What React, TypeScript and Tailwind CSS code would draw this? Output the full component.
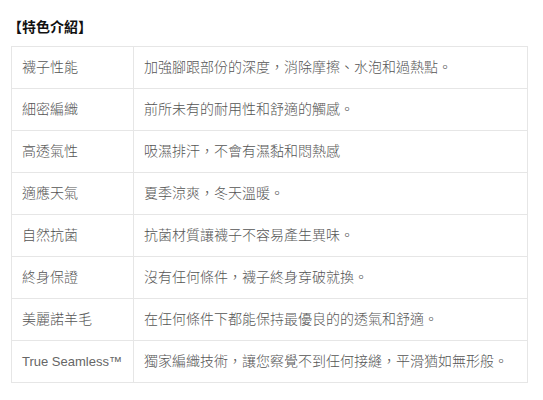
const rows: [string, string][] = [
  ["襪子性能", "加強腳跟部份的深度，消除摩擦、水泡和過熱點。"],
  ["細密編織", "前所未有的耐用性和舒適的觸感。"],
  ["高透氣性", "吸濕排汗，不會有濕黏和悶熱感"],
  ["適應天氣", "夏季涼爽，冬天溫暖。"],
  ["自然抗菌", "抗菌材質讓襪子不容易產生異味。"],
  ["終身保證", "沒有任何條件，襪子終身穿破就換。"],
  ["美麗諾羊毛", "在任何條件下都能保持最優良的的透氣和舒適。"],
  ["True Seamless™", "獨家編織技術，讓您察覺不到任何接縫，平滑猶如無形般。"],
];

export default function App() {
  return (
    <div className="bg-white w-[543px] h-[400px] pt-[18px] pl-[11px] font-['Liberation_Sans','Noto_Sans_CJK_TC',sans-serif]">
      <h2 className="text-[14px] leading-[18px] font-bold text-[#111] mb-[10px] -ml-[3px]">【特色介紹】</h2>
      <table className="w-[517px] border-collapse text-[14px] font-light text-[#555]">
        <tbody>
          {rows.map(([k, v]) => (
            <tr key={k} className="h-[42px]">
              <td className="w-[122px] border border-[#e6e6e6] px-[10px] whitespace-nowrap">
                {k.startsWith("True") ? <span className="text-[13px] text-[#666]">{k}</span> : k}
              </td>
              <td className="border border-[#e6e6e6] px-[10px] whitespace-nowrap">{v}</td>
            </tr>
          ))}
        </tbody>
      </table>
    </div>
  );
}
